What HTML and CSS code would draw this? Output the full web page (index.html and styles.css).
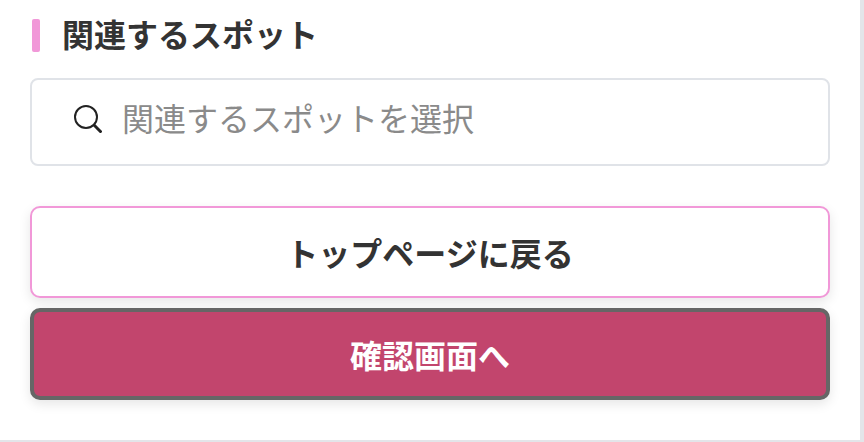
FILE: index.html
```html
<!DOCTYPE html>
<html lang="ja">
<head>
    <meta charset="UTF-8">
    <meta name="viewport" content="width=device-width, initial-scale=1.0">
    <title>関連するスポット</title>
    <link rel="stylesheet" href="styles.css">
</head>
<body>
    <div class="panel">
        <h2 class="section-title">関連するスポット</h2>

        <div class="search-box">
            <svg class="search-icon" viewBox="0 0 28 28" width="28" height="28" aria-hidden="true">
                <circle cx="12" cy="12" r="11" fill="none" stroke="#222" stroke-width="2"></circle>
                <path d="M19.5 19.5 L27.5 27.5" fill="none" stroke="#222" stroke-width="3"></path>
            </svg>
            <span class="search-placeholder">関連するスポットを選択</span>
        </div>

        <div class="button-container">
            <button class="back-btn">トップページに戻る</button>
            <button class="confirm-btn">確認画面へ</button>
        </div>
    </div>
</body>
</html>
```

FILE: styles.css
```css
* {
    margin: 0;
    padding: 0;
    box-sizing: border-box;
}

html, body {
    height: 100%;
}

body {
    font-family: "Noto Sans CJK JP", "Noto Sans", sans-serif;
    background: #e3e5e9;
    overflow: hidden;
}

.panel {
    width: 860px;
    height: 440px;
    background: #fff;
    padding: 19px 30px 0;
}

.section-title {
    height: 33px;
    margin-left: 2px;
    display: flex;
    align-items: flex-start;
    gap: 22px;
    color: #333;
    font-size: 32px;
    font-weight: 700;
    line-height: 29px;
}

.section-title::before {
    content: "";
    width: 8px;
    height: 33px;
    background: #f198d8;
    border-radius: 2px;
}

.search-box {
    height: 88px;
    margin-top: 26px;
    padding: 0 0 6px 42px;
    border: 2px solid #e0e3e8;
    border-radius: 8px;
    display: flex;
    align-items: center;
    gap: 20px;
}

.search-icon {
    flex-shrink: 0;
}

.search-placeholder {
    padding-bottom: 4px;
    color: #8a8a8a;
    font-size: 32px;
}

.button-container {
    margin-top: 40px;
    display: flex;
    flex-direction: column;
    gap: 10px;
}

.back-btn,
.confirm-btn {
    width: 800px;
    height: 92px;
    border-radius: 10px;
    font-family: inherit;
    font-size: 32px;
    font-weight: 700;
    box-shadow: 0 4px 12px rgba(0, 0, 0, 0.1);
}

.back-btn {
    background: #fff;
    color: #333;
    border: 2px solid #f198d8;
}

.confirm-btn {
    background: #c2456d;
    color: #fff;
    border: 4px solid #666;
}
```
